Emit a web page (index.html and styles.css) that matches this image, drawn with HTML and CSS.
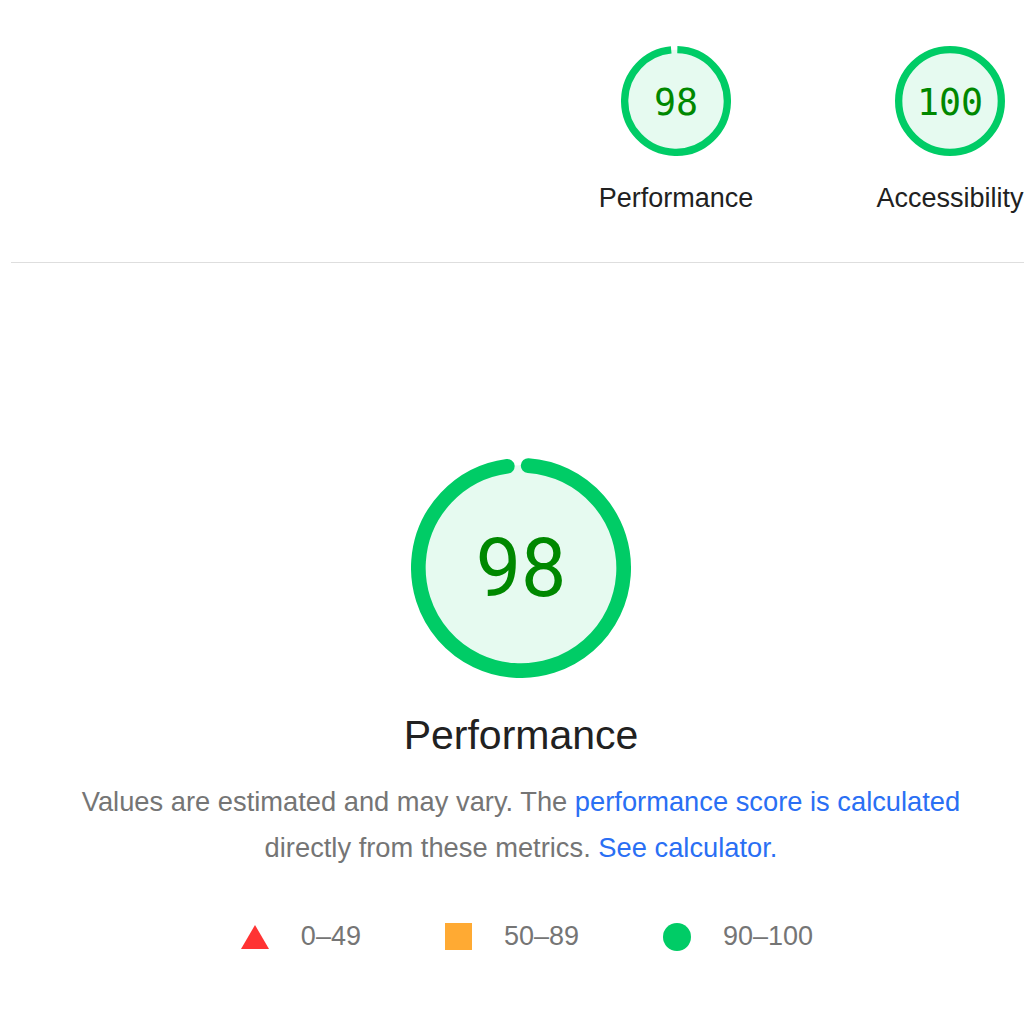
FILE: index.html
```html
<!DOCTYPE html>
<html lang="en">
<head>
  <meta charset="UTF-8" />
  <meta name="viewport" content="width=device-width, initial-scale=1.0" />
  <title>Lighthouse Report</title>
  <link rel="stylesheet" href="styles.css">
</head>
<body>
  <div class="page">
    <div class="scores">
      <div class="score">
        <svg class="gauge-sm" viewBox="0 0 120 120">
          <circle class="gauge-base" cx="60" cy="60" r="56"></circle>
          <circle class="gauge-arc" cx="60" cy="60" r="56" stroke-dasharray="344.5 351.9" transform="rotate(-88.5 60 60)"></circle>
          <text class="gauge-num-sm" x="60" y="75" text-anchor="middle">98</text>
        </svg>
        <div class="score-label">Performance</div>
      </div>
      <div class="score">
        <svg class="gauge-sm" viewBox="0 0 120 120">
          <circle class="gauge-base" cx="60" cy="60" r="56"></circle>
          <circle class="gauge-arc" cx="60" cy="60" r="56"></circle>
          <text class="gauge-num-sm" x="60" y="75" text-anchor="middle">100</text>
        </svg>
        <div class="score-label">Accessibility</div>
      </div>
    </div>

    <hr class="divider" />

    <div class="category">
      <svg class="gauge-lg" viewBox="0 0 120 120">
        <circle class="gauge-base" cx="60" cy="60" r="56"></circle>
        <circle class="gauge-arc round" cx="60" cy="60" r="56" stroke-dasharray="340 351.9" transform="rotate(-86 60 60)"></circle>
        <text class="gauge-num-lg" x="60" y="75" text-anchor="middle">98</text>
      </svg>
      <h2 class="cat-title">Performance</h2>
      <p class="cat-desc">
        Values are estimated and may vary. The <a href="#">performance score is calculated</a>
        directly from these metrics. <a href="#">See calculator.</a>
      </p>

      <div class="legend">
        <div class="legend-item">
          <svg class="shape" viewBox="0 0 28 28"><polygon points="14,2 28,26 0,26" fill="#f33"></polygon></svg>
          <span>0–49</span>
        </div>
        <div class="legend-item">
          <span class="shape square"></span>
          <span>50–89</span>
        </div>
        <div class="legend-item">
          <span class="shape dot"></span>
          <span>90–100</span>
        </div>
      </div>
    </div>
  </div>
</body>
</html>
```

FILE: styles.css
```css
html, body { margin: 0; padding: 0; background: #fff; overflow: hidden; }
body { font-family: "Liberation Sans", Arial, sans-serif; color: #212121; }
.page { width: 1020px; padding-left: 11px; }

.scores { display: flex; gap: 70px; padding-left: 563px; padding-top: 46px; width: 800px; }
.score { width: 204px; flex: none; display: flex; flex-direction: column; align-items: center; }
.gauge-sm { width: 110px; height: 110px; display: block; }
.score-label { margin-top: 27px; font-size: 27px; line-height: 30px; color: #212121; white-space: nowrap; }

.gauge-base { fill: #e6faf0; stroke: none; }
.gauge-arc { fill: none; stroke: #0c6; stroke-width: 8; }
.gauge-arc.round { stroke-linecap: round; }
.gauge-num-sm { font-family: "DejaVu Sans Mono", monospace; font-size: 40px; fill: #080; }
.gauge-num-lg { font-family: Roboto, "Liberation Sans", sans-serif; font-size: 44px; fill: #080; }

.divider { border: none; border-top: 1px solid #dedede; margin: 49px 0 0; }

.category { display: flex; flex-direction: column; align-items: center; padding-top: 195px; }
.gauge-lg { width: 220px; height: 220px; display: block; }
.cat-title { margin: 34px 0 0; font-size: 41px; font-weight: 400; line-height: 46px; color: #212121; }
.cat-desc { margin: 21px 0 0; font-size: 27.3px; line-height: 46px; color: #757575; text-align: center; max-width: 920px; }
.cat-desc a { color: #2a6ff4; text-decoration: none; }

.legend { display: flex; gap: 84px; margin-top: 50px; font-size: 27px; color: #757575; padding-left: 12px; }
.legend-item { display: flex; align-items: center; gap: 32px; }
.shape { width: 28px; height: 28px; display: block; }
.square { background: #fa3; width: 27px; height: 27px; }
.dot { background: #0c6; border-radius: 50%; }
```
